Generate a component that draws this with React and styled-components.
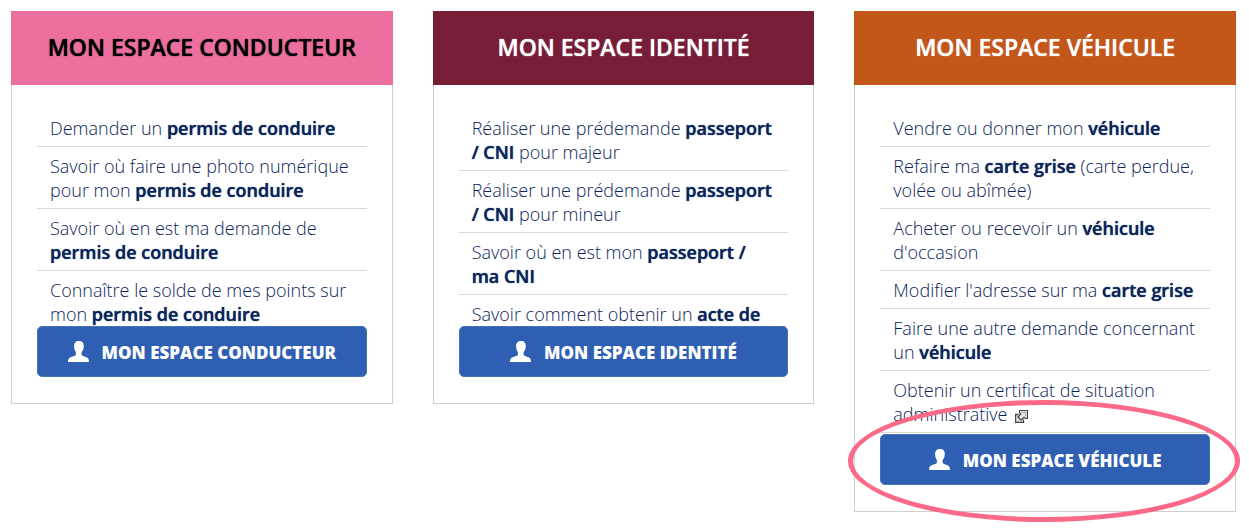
import React from "react";
import styled, { createGlobalStyle } from "styled-components";

const GlobalStyle = createGlobalStyle`
  *, *::before, *::after { box-sizing: border-box; }
  body {
    margin: 0;
    background: #fff;
    font-family: "Open Sans", "Noto Sans", sans-serif;
  }
`;

const Spaces = styled.main`
  display: grid;
  grid-template-columns: repeat(3, minmax(0, 1fr));
  align-items: start;
  gap: 40px;
  padding: 11px 13px 20px 11px;
`;

const Card = styled.section`
  display: flex;
  flex-direction: column;
`;

const CardTitle = styled.h2`
  margin: 0;
  padding: 20px 0 22px;
  background: ${(p) => p.$background};
  color: ${(p) => p.$color};
  font-size: 23px;
  font-weight: 600;
  line-height: 32px;
  text-align: center;
  text-shadow: 0 0 1px currentColor;
`;

const CardBody = styled.div`
  padding: 24px 25px 26px;
  border: 1px solid #cfcfcf;
  border-top: 0;
`;

const LinkList = styled.ul`
  margin: 0;
  padding: 0;
  list-style: none;
  height: ${(p) => p.$height}px;
  overflow: hidden;
`;

const LinkItem = styled.li`
  padding: 7px 12px 6px 13px;
  border-bottom: 1px solid #d9d9d9;
  font-size: 18px;
  line-height: 24px;
`;

const ServiceLink = styled.a`
  color: #0b2459;
  font-weight: 300;
  text-decoration: none;

  strong {
    font-weight: 600;
    text-shadow: 0 0 1px currentColor;
  }
`;

const Action = styled.div`
  position: relative;
`;

const SpaceButton = styled.button`
  display: flex;
  align-items: center;
  justify-content: center;
  gap: 13px;
  width: 100%;
  height: 51px;
  padding: 2px 0 0;
  border: 1px solid #4674b0;
  border-radius: 5px;
  background: #2f5fb3;
  color: #fff;
  font-family: inherit;
  font-size: 17px;
  font-weight: 800;
  line-height: 24px;
  cursor: pointer;
`;

const Highlight = styled.span`
  position: absolute;
  inset: -34px -30px -37px -32px;
  border: 5px solid #fb6a88;
  border-radius: 50%;
  pointer-events: none;
`;

const InlineIcon = styled.svg`
  margin-left: 3px;
  vertical-align: -2px;
`;

const Glyph = styled.svg`
  flex: none;
  margin-bottom: 2px;
`;

function UserIcon() {
  return (
    <Glyph width="21" height="21" viewBox="0 0 21 21" fill="#fff" aria-hidden="true">
      <path d="M11 0C7.8 0 6 2 6.1 5.2C6.2 8.2 6.9 9.6 7.9 11V13.4C7.6 14.8 5.5 15.2 3.2 16.1C1 16.9 0.1 17.8 0 21H21C20.9 17.8 20.1 16.9 17.9 16.1C15.8 15.2 13.9 14.8 13.6 13.4V11C14.9 9.6 15.6 8.2 15.8 5.2C16 2 14.2 0 11 0Z" />
    </Glyph>
  );
}

function ExternalIcon() {
  return (
    <InlineIcon width="13" height="13" viewBox="0 0 13 13" role="img" aria-label="Nouvelle fenêtre">
      <path d="M0.5 4.5H4.5V8.5H8.5V12.5H0.5Z" fill="#ddd" />
      <path d="M3.5 4.5H0.5V12.5H8.5V9.5" fill="none" stroke="#444" strokeWidth="1.3" />
      <path
        d="M4.5 0.5H12.5V8.5H10.5L9 7.2L6 10L3 7L5.8 4.3L4.5 2.5Z"
        fill="#e8e8e8"
        stroke="#444"
        strokeWidth="1.2"
      />
      <path d="M6.5 2.5H10.5V6.5" fill="none" stroke="#aaa" />
    </InlineIcon>
  );
}

const B = "strong";

const spaces = [
  {
    title: "MON ESPACE CONDUCTEUR",
    background: "#ec6fa0",
    color: "#000",
    listHeight: 217,
    links: [
      <>Demander un <B>permis de conduire</B></>,
      <>Savoir où faire une photo numérique pour mon <B>permis de conduire</B></>,
      <>Savoir où en est ma demande de <B>permis de conduire</B></>,
      <>Connaître le solde de mes points sur mon <B>permis de conduire</B></>,
    ],
  },
  {
    title: "MON ESPACE IDENTITÉ",
    background: "#771d35",
    color: "#fff",
    listHeight: 217,
    links: [
      <>Réaliser une prédemande <B>passeport / CNI</B> pour majeur</>,
      <>Réaliser une prédemande <B>passeport / CNI</B> pour mineur</>,
      <>Savoir où en est mon <B>passeport / ma CNI</B></>,
      <>Savoir comment obtenir un <B>acte de</B></>,
    ],
  },
  {
    title: "MON ESPACE VÉHICULE",
    background: "#c35619",
    color: "#fff",
    listHeight: 325,
    highlighted: true,
    links: [
      <>Vendre ou donner mon <B>véhicule</B></>,
      <>Refaire ma <B>carte grise</B> (carte perdue, volée ou abîmée)</>,
      <>Acheter ou recevoir un <B>véhicule</B> d'occasion</>,
      <>Modifier l'adresse sur ma <B>carte grise</B></>,
      <>Faire une autre demande concernant un <B>véhicule</B></>,
      <>Obtenir un certificat de situation administrative <ExternalIcon /></>,
    ],
  },
];

export default function App() {
  return (
    <>
      <GlobalStyle />
      <Spaces>
        {spaces.map((space) => (
          <Card key={space.title}>
            <CardTitle $background={space.background} $color={space.color}>
              {space.title}
            </CardTitle>
            <CardBody>
              <LinkList $height={space.listHeight}>
                {space.links.map((link, i) => (
                  <LinkItem key={i}>
                    <ServiceLink href="#">{link}</ServiceLink>
                  </LinkItem>
                ))}
              </LinkList>
              <Action>
                <SpaceButton type="button">
                  <UserIcon />
                  {space.title}
                </SpaceButton>
                {space.highlighted && <Highlight />}
              </Action>
            </CardBody>
          </Card>
        ))}
      </Spaces>
    </>
  );
}
